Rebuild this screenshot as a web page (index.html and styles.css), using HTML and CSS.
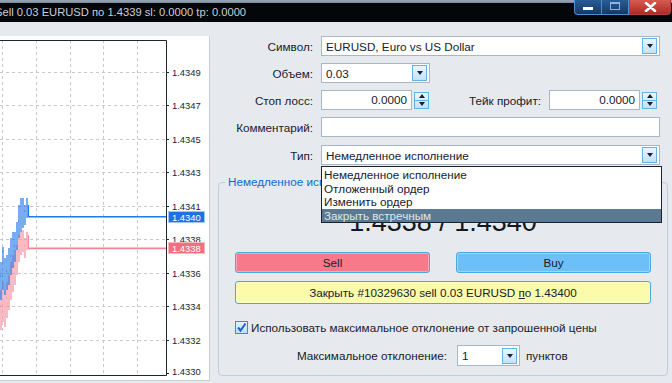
FILE: index.html
```html
<!DOCTYPE html>
<html>

<head>
  <meta charset="UTF-8">
  <title>Ордер</title>
  <link rel="stylesheet" href="styles.css">
</head>

<body>
  <div class="window">
    <!-- Title bar -->
    <div class="titlebar">
      <span class="title">Sell 0.03 EURUSD по 1.4339 sl: 0.0000 tp: 0.0000</span>
      <div class="win-buttons">
        <span class="wb wb-min"><span class="min-bar"></span></span>
        <span class="wb wb-max"><span class="max-box"></span></span>
        <span class="wb wb-close">
          <svg width="13" height="10" viewBox="0 0 13 10">
            <path d="M2 1L11 9M11 1L2 9" stroke="#fff" stroke-width="2.6" stroke-linecap="round"/>
          </svg>
        </span>
      </div>
    </div>

    <div class="content">
      <!-- Chart -->
      <div class="chart">
        <svg width="209" height="344" viewBox="0 0 209 344">
          <g stroke="#c3cad2" stroke-width="1" stroke-dasharray="3 3" fill="none">
            <path d="M0 36.5H166M0 69.5H166M0 103.5H166M0 136.5H166M0 170.5H166M0 203.5H166M0 237.5H166M0 270.5H166M0 304.5H166"/>
            <path d="M2.5 4V339M36.5 4V339M70.5 4V339M103.5 4V339M137.5 4V339"/>
          </g>
          <g stroke="#1d2530" stroke-width="1" fill="none">
            <path d="M0 4.5H166.5V339.5H0"/>
            <path d="M166 36.5h3M166 69.5h3M166 103.5h3M166 136.5h3M166 170.5h3M166 203.5h3M166 237.5h3M166 270.5h3M166 304.5h3M166 337.5h3"/>
          </g>
          <!-- bid bars -->
          <path stroke="#f48e9b" stroke-width="1.2" fill="none"
            d="M1 254V294M0 270h1M3 246V286M5 254V291M7 246V282M6 262h1M9 239V274M11 226V264M10 250h1M13 219V256M15 214V249M14 230h1M17 209V239M19 199V226M18 215h1M21 196V219M23 194V216M25 202V222M24 210h1M27 196V214M28.5 199V213M28.5 213h1"/>
          <!-- ask bars -->
          <path stroke="#1e78e6" stroke-width="1.2" fill="none"
            d="M1 226V264M0 240h1M3 211V254M5 222V259M7 219V254M6 235h1M9 212V249M11 202V239M10 220h1M13 196V232M15 196V226M14 210h1M17 186V214M19 169V202M18 185h1M21 162V196M23 162V192M25 169V189M24 175h1M27 162V182M28.5 169V181M28.5 181h1"/>
          <path d="M29 180.7H166" stroke="#1f7ae8" stroke-width="1.6"/>
          <path d="M29 212.3H166" stroke="#f28594" stroke-width="1.8"/>
          <g class="axis-text">
            <text x="172" y="39.5">1.4349</text>
            <text x="172" y="73">1.4347</text>
            <text x="172" y="106.5">1.4345</text>
            <text x="172" y="140">1.4343</text>
            <text x="172" y="173.5">1.4341</text>
            <text x="172" y="207">1.4338</text>
            <text x="172" y="240.5">1.4336</text>
            <text x="172" y="274">1.4334</text>
            <text x="172" y="307.5">1.4332</text>
            <text x="172" y="338.5">1.4330</text>
          </g>
          <rect x="168.5" y="175.5" width="36" height="11" fill="#1f72e4" stroke="#9cc6f4"/>
          <text class="tag-text" x="172" y="184.5">1.4340</text>
          <rect x="168.5" y="206.5" width="36" height="11" fill="#f1707f" stroke="#f8b8c0"/>
          <text class="tag-text" x="172" y="215.5">1.4338</text>
        </svg>
      </div>

      <!-- Order form -->
      <div class="order">
        <div class="fields">
          <div class="row">
            <span class="lbl">Символ:</span>
            <div class="combo wide"><span class="value">EURUSD, Euro vs US Dollar</span><span class="drop-btn"></span></div>
          </div>
          <div class="row">
            <span class="lbl">Объем:</span>
            <div class="combo narrow"><span class="value">0.03</span><span class="drop-btn"></span></div>
          </div>
          <div class="row">
            <span class="lbl">Стоп лосс:</span>
            <div class="spin-field">
              <span class="box">0.0000</span>
              <span class="spinner"><span class="half"><i class="tri-up"></i></span><span class="half"><i class="tri-down"></i></span></span>
            </div>
            <span class="lbl tp-lbl">Тейк профит:</span>
            <div class="spin-field tp">
              <span class="box">0.0000</span>
              <span class="spinner"><span class="half"><i class="tri-up"></i></span><span class="half"><i class="tri-down"></i></span></span>
            </div>
          </div>
          <div class="row">
            <span class="lbl">Комментарий:</span>
            <div class="input wide"></div>
          </div>
          <div class="row type-row">
            <span class="lbl">Тип:</span>
            <div class="combo wide open">
              <span class="value">Немедленное исполнение</span><span class="drop-btn"></span>
              <ul class="droplist">
                <li>Немедленное исполнение</li>
                <li>Отложенный ордер</li>
                <li>Изменить ордер</li>
                <li class="selected">Закрыть встречным</li>
              </ul>
            </div>
          </div>
        </div>

        <div class="group">
          <span class="group-title">Немедленное исполнение</span>
          <div class="price">1.4338 / 1.4340</div>
          <div class="trade-buttons">
            <div class="btn sell">Sell</div>
            <div class="btn buy">Buy</div>
          </div>
          <div class="btn close-btn">Закрыть #10329630 sell 0.03 EURUSD <u>п</u>о 1.43400</div>
          <div class="check-row">
            <span class="check">
              <svg width="11" height="11" viewBox="0 0 11 11">
                <path d="M2 5.5L4.5 8.5L9.5 1.5" stroke="#1a62c6" stroke-width="2" fill="none"/>
              </svg>
            </span>
            <span>Использовать максимальное отклонение от запрошенной цены</span>
          </div>
          <div class="dev-row">
            <span class="dev-lbl">Максимальное отклонение:</span>
            <div class="combo dev"><span class="value">1</span><span class="drop-btn"></span></div>
            <span class="units">пунктов</span>
          </div>
        </div>
      </div>
    </div>
  </div>
</body>

</html>
```

FILE: styles.css
```css
body {
  margin: 0;
  padding: 0;
  background-color: #e6eaee;
  font-family: "Liberation Sans", Arial, sans-serif;
  font-size: 11.7px;
  color: #18212c;
}

.window {
  width: 672px;
  height: 383px;
  overflow: hidden;
}

/* Title bar */
.titlebar {
  height: 22px;
  display: flex;
  background: linear-gradient(#9aa8b6 0, #7d8c9c 3px, #04070a 3px);
}

.title {
  padding-top: 3px;
  line-height: 19px;
  font-size: 11.2px;
  color: #c9ced3;
  margin-left: -5px;
  white-space: nowrap;
}

.win-buttons {
  display: flex;
  margin-left: auto;
  margin-right: 1px;
  height: 15px;
}

.wb {
  box-sizing: border-box;
  height: 15px;
  border: 1px solid #4f8ed0;
  border-top: none;
  display: flex;
  align-items: center;
  justify-content: center;
  background: linear-gradient(#2a5d96, #123a68);
}

.wb-min {
  width: 28px;
  border-radius: 0 0 0 4px;
  align-items: flex-end;
  padding-bottom: 4px;
}

.min-bar {
  width: 10px;
  height: 3px;
  background: #fff;
}

.wb-max {
  width: 27px;
  border-left: none;
}

.max-box {
  width: 8px;
  height: 5px;
  border: 1px solid #86b6e6;
  border-top-width: 2px;
  margin-top: -3px;
}

.wb-close {
  width: 42px;
  border: 1px solid #b04040;
  border-top: none;
  border-radius: 0 0 4px 0;
  background: linear-gradient(#d85a50, #b02a24);
}

/* Layout */
.content {
  display: flex;
}

.chart {
  width: 209px;
  height: 344px;
  margin-top: 14px;
  background-color: #fff;
  border-right: 1px solid #c6ced6;
  border-bottom: 1px solid #c6ced6;
}

.chart svg {
  display: block;
}

.axis-text text {
  font-family: "Liberation Sans", Arial, sans-serif;
  font-size: 9.4px;
  fill: #1b2330;
}

.tag-text {
  font-family: "Liberation Sans", Arial, sans-serif;
  font-size: 9.4px;
  fill: #fff;
}

.order {
  flex: 1;
  padding-top: 14px;
}

/* Form fields */
.fields {
  display: flex;
  flex-direction: column;
  gap: 7px;
}

.row {
  display: flex;
  align-items: center;
  height: 20px;
}

.type-row {
  margin-top: 1px;
}

.lbl {
  width: 103px;
  margin-right: 8px;
  text-align: right;
  white-space: nowrap;
}

.tp-lbl {
  width: 111px;
}

.combo,
.input {
  position: relative;
  box-sizing: border-box;
  height: 20px;
  display: flex;
  align-items: center;
  border: 1px solid #a9b6c4;
  background-color: #fff;
  padding: 0 2px 0 4px;
}

.combo .value {
  flex: 1;
  white-space: nowrap;
}

.wide {
  width: 339px;
}

.narrow {
  width: 109px;
}

.drop-btn {
  box-sizing: border-box;
  width: 15px;
  height: 16px;
  border: 1px solid #62b4e8;
  background: linear-gradient(#e9f5fd, #c3e2f7);
  display: flex;
  align-items: center;
  justify-content: center;
}

.drop-btn::after {
  content: "";
  border-left: 3.5px solid transparent;
  border-right: 3.5px solid transparent;
  border-top: 4px solid #18222e;
}

.spin-field {
  display: flex;
  align-items: center;
  width: 109px;
  height: 20px;
}

.spin-field.tp {
  width: 111px;
}

.spin-field .box {
  box-sizing: border-box;
  width: 91px;
  height: 20px;
  line-height: 18px;
  border: 1px solid #a9b6c4;
  background-color: #fff;
  text-align: right;
  padding-right: 4px;
}

.spinner {
  box-sizing: border-box;
  width: 15px;
  height: 17px;
  margin-left: 2px;
  display: flex;
  flex-direction: column;
  border: 1px solid #62b4e8;
  background: linear-gradient(#e9f5fd, #c3e2f7);
}

.spinner .half {
  flex: 1;
  display: flex;
  align-items: center;
  justify-content: center;
}

.spinner .half + .half {
  border-top: 1px solid #62b4e8;
}

.tri-up {
  border-left: 3.5px solid transparent;
  border-right: 3.5px solid transparent;
  border-bottom: 4px solid #18222e;
}

.tri-down {
  border-left: 3.5px solid transparent;
  border-right: 3.5px solid transparent;
  border-top: 4px solid #18222e;
}

/* Open dropdown list */
.droplist {
  position: absolute;
  top: 20px;
  left: -1px;
  width: 341px;
  box-sizing: border-box;
  margin: 0;
  padding: 1px 0 0;
  list-style-type: none;
  background-color: #fff;
  border: 1px solid #1a232d;
  z-index: 10;
}

.droplist li {
  line-height: 13.5px;
  padding-left: 2px;
}

.droplist li.selected {
  background-color: #5b7990;
  color: #dfe6ec;
}

/* Execution group */
.group {
  margin: 17px 4px 0 8px;
  padding-bottom: 9px;
  border: 1px solid #c4ccd5;
  border-radius: 4px;
}

.group-title {
  display: block;
  width: fit-content;
  margin: -8px 0 0 6px;
  padding: 0 3px;
  line-height: 14px;
  background-color: #e6eaee;
  color: #1466d2;
}

.price {
  margin-top: 18px;
  font-size: 27px;
  line-height: 30px;
  text-align: center;
  color: #111820;
}

.trade-buttons {
  display: flex;
  gap: 26px;
  margin: 15px 16px 0;
}

.btn {
  box-sizing: border-box;
  height: 21px;
  line-height: 19px;
  text-align: center;
  border: 1px solid #4aa8e0;
  border-radius: 3px;
  box-shadow: inset 0 0 0 1px rgba(255, 255, 255, 0.35);
}

.trade-buttons .btn {
  flex: 1;
}

.sell {
  background-color: #f87a8a;
}

.buy {
  background-color: #6dbff8;
}

.close-btn {
  margin: 8px 16px 0;
  height: 23px;
  line-height: 21px;
  background-color: #fbfbaa;
}

.check-row {
  display: flex;
  align-items: center;
  margin: 17px 0 0 16px;
  height: 13px;
}

.check {
  box-sizing: border-box;
  width: 13px;
  height: 13px;
  margin-right: 3px;
  border: 1px solid #3d8bd2;
  background: linear-gradient(#e2f1fe, #bcdffa);
  display: flex;
  align-items: center;
  justify-content: center;
}

.dev-row {
  display: flex;
  align-items: center;
  margin-top: 11px;
}

.dev-lbl {
  width: 228px;
  margin-right: 10px;
  text-align: right;
}

.combo.dev {
  width: 63px;
  height: 21px;
}

.units {
  margin-left: 6px;
}
```
